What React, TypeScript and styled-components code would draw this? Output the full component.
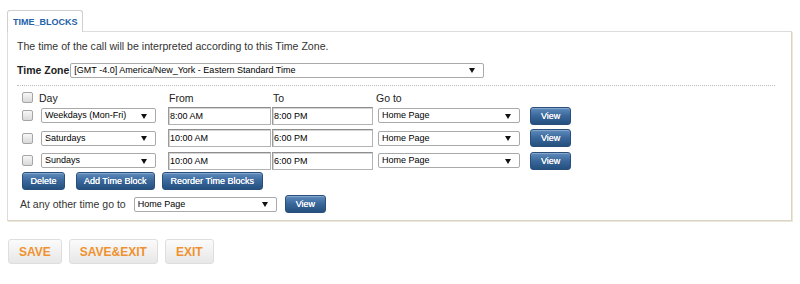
import React from 'react';
import styled, { createGlobalStyle } from 'styled-components';

const GlobalStyle = createGlobalStyle`
  body {
    margin: 0;
    background: #fff;
    font-family: "Liberation Sans", Arial, sans-serif;
    color: #333;
  }
`;

const days = ['Weekdays (Mon-Fri)', 'Saturdays', 'Sundays'];

const blocks = [
  { day: 'Weekdays (Mon-Fri)', from: '8:00 AM', to: '8:00 PM' },
  { day: 'Saturdays', from: '10:00 AM', to: '6:00 PM' },
  { day: 'Sundays', from: '10:00 AM', to: '6:00 PM' },
];

const Dropdown: React.FC<{ width: number; value: string; options: string[]; offset?: number }> = ({
  width,
  value,
  options,
  offset = 0,
}) => (
  <SelectWrap $width={width} $offset={offset}>
    <SelectBox defaultValue={value}>
      {options.map(o => (
        <option key={o}>{o}</option>
      ))}
    </SelectBox>
  </SelectWrap>
);

const App: React.FC = () => {
  return (
    <Page>
      <GlobalStyle />
      <Tab>TIME_BLOCKS</Tab>
      <Panel>
        <Intro>The time of the call will be interpreted according to this Time Zone.</Intro>
        <ZoneRow>
          <ZoneLabel>Time Zone</ZoneLabel>
          <Dropdown
            width={414}
            offset={1}
            value="[GMT -4.0] America/New_York - Eastern Standard Time"
            options={['[GMT -4.0] America/New_York - Eastern Standard Time']}
          />
        </ZoneRow>
        <Divider />
        <Row $header>
          <Check type="checkbox" />
          <HeadCell>Day</HeadCell>
          <HeadCell $pad={1}>From</HeadCell>
          <HeadCell $pad={1}>To</HeadCell>
          <HeadCell>Go to</HeadCell>
          <span />
        </Row>
        {blocks.map((b, i) => (
          <Row key={i}>
            <Check type="checkbox" />
            <Dropdown width={115} offset={2} value={b.day} options={days} />
            <TimeInput $width={103} defaultValue={b.from} />
            <TimeInput $width={101} defaultValue={b.to} />
            <Dropdown width={142} offset={2} value="Home Page" options={['Home Page']} />
            <BlueButton $px={10}>View</BlueButton>
          </Row>
        ))}
        <ActionRow>
          <BlueButton $px={7.5} $gapAfter={11}>Delete</BlueButton>
          <BlueButton $px={7} $gapAfter={7}>Add Time Block</BlueButton>
          <BlueButton $px={8}>Reorder Time Blocks</BlueButton>
        </ActionRow>
        <OtherRow>
          <OtherLabel>At any other time go to</OtherLabel>
          <Dropdown width={143} offset={8} value="Home Page" options={['Home Page']} />
          <BlueButton $px={10} $gapBefore={8}>View</BlueButton>
        </OtherRow>
      </Panel>
      <SaveBar>
        <SaveButton>SAVE</SaveButton>
        <SaveButton>SAVE&amp;EXIT</SaveButton>
        <SaveButton>EXIT</SaveButton>
      </SaveBar>
    </Page>
  );
};

const Page = styled.div`
  padding: 10px 0 0 7px;
`;

const Tab = styled.div`
  position: relative;
  z-index: 1;
  display: inline-flex;
  align-items: center;
  box-sizing: border-box;
  height: 22px;
  margin-bottom: -1px;
  padding: 0 4px 0 5px;
  border: 1px solid #cfcfcf;
  border-bottom: none;
  border-radius: 3px 3px 0 0;
  background: #fff;
  color: #2461a8;
  font-size: 9px;
  font-weight: bold;
`;

const Panel = styled.div`
  box-sizing: border-box;
  width: 785px;
  padding: 7px 9px 7px 9px;
  border: 1px solid #dcdcdc;
  border-right-color: #d9d4c3;
  border-bottom-color: #d9d4c3;
  box-shadow: 1px 1px 0 #ebe7db;
`;

const Intro = styled.div`
  font-size: 10.6px;
  line-height: 14px;
  color: #333;
`;

const ZoneRow = styled.div`
  display: flex;
  align-items: center;
  height: 16px;
  margin-top: 9px;
`;

const ZoneLabel = styled.span`
  font-size: 10.5px;
  font-weight: bold;
  color: #222;
`;

const SelectWrap = styled.span<{ $width: number; $offset: number }>`
  position: relative;
  display: block;
  width: ${p => p.$width}px;
  margin-left: ${p => p.$offset}px;

  &::after {
    content: '';
    position: absolute;
    top: 50%;
    right: 9px;
    margin-top: -2px;
    border-left: 3px solid transparent;
    border-right: 3px solid transparent;
    border-top: 5px solid #111;
    pointer-events: none;
  }
`;

const SelectBox = styled.select`
  appearance: none;
  display: block;
  box-sizing: border-box;
  width: 100%;
  height: 15px;
  margin: 0;
  padding: 0 16px 0 3px;
  border: 1px solid #a9a9a9;
  border-radius: 2px;
  background: #fff;
  color: #000;
  font-family: "Liberation Sans", Arial, sans-serif;
  font-size: 9px;
  line-height: 13px;
  outline: none;
`;

const Divider = styled.div`
  margin: 7px 7px 0 0;
  border-top: 1px dotted #bdbdbd;
`;

const Row = styled.div<{ $header?: boolean }>`
  display: grid;
  grid-template-columns: 22px 129px 104px 104px 154px auto;
  align-items: center;
  height: ${p => (p.$header ? 14 : 22.5)}px;
  margin-top: ${p => (p.$header ? 4.5 : 0)}px;
`;

const Check = styled.input`
  appearance: none;
  display: block;
  box-sizing: border-box;
  width: 11px;
  height: 11px;
  margin: 0 0 0 5px;
  border: 1px solid #a5a5a5;
  border-radius: 2px;
  background: linear-gradient(#f7f7f7, #d9d9d9);
`;

const HeadCell = styled.span<{ $pad?: number }>`
  padding-left: ${p => p.$pad ?? 0}px;
  font-size: 10.5px;
  color: #222;
`;

const TimeInput = styled.input<{ $width: number }>`
  display: block;
  box-sizing: border-box;
  width: ${p => p.$width}px;
  height: 18px;
  margin: 0;
  padding: 0 1px;
  border: 1px solid #b3b3b3;
  border-top-color: #8e8e8e;
  border-left-color: #9a9a9a;
  box-shadow: inset 1px 1px 0 #d4d4d4;
  color: #000;
  font-family: "Liberation Sans", Arial, sans-serif;
  font-size: 9px;
  outline: none;
`;

const BlueButton = styled.button<{ $px: number; $gapAfter?: number; $gapBefore?: number }>`
  display: inline-flex;
  align-items: center;
  justify-content: center;
  justify-self: start;
  box-sizing: border-box;
  height: 18px;
  margin: 0 ${p => p.$gapAfter ?? 0}px 0 ${p => p.$gapBefore ?? 0}px;
  padding: 0 ${p => p.$px}px;
  border: 1px solid #2a4f7c;
  border-radius: 3px;
  background: linear-gradient(#5f8cbd, #3a679a 50%, #24507f);
  box-shadow: inset 0 1px 0 rgba(255, 255, 255, 0.25);
  color: #fff;
  font-family: "Liberation Sans", Arial, sans-serif;
  font-size: 9px;
  text-shadow: 0 0 0.4px #fff;
  white-space: nowrap;
  cursor: pointer;
`;

const ActionRow = styled.div`
  display: flex;
  align-items: center;
  height: 18px;
  padding-left: 5px;
`;

const OtherRow = styled.div`
  display: flex;
  align-items: center;
  height: 18px;
  margin-top: 5px;
  padding-left: 3px;
`;

const OtherLabel = styled.span`
  font-size: 10.5px;
  color: #333;
`;

const SaveBar = styled.div`
  display: flex;
  gap: 7px;
  margin: 18px 0 0 1px;
`;

const SaveButton = styled.button`
  box-sizing: border-box;
  height: 25px;
  padding: 0 10px;
  border: 1px solid #dedede;
  border-radius: 3px;
  background: linear-gradient(#fbfbfb, #e7e7e7);
  color: #f0912f;
  font-family: "Liberation Sans", Arial, sans-serif;
  font-size: 12px;
  font-weight: bold;
  cursor: pointer;
`;

export default App;
